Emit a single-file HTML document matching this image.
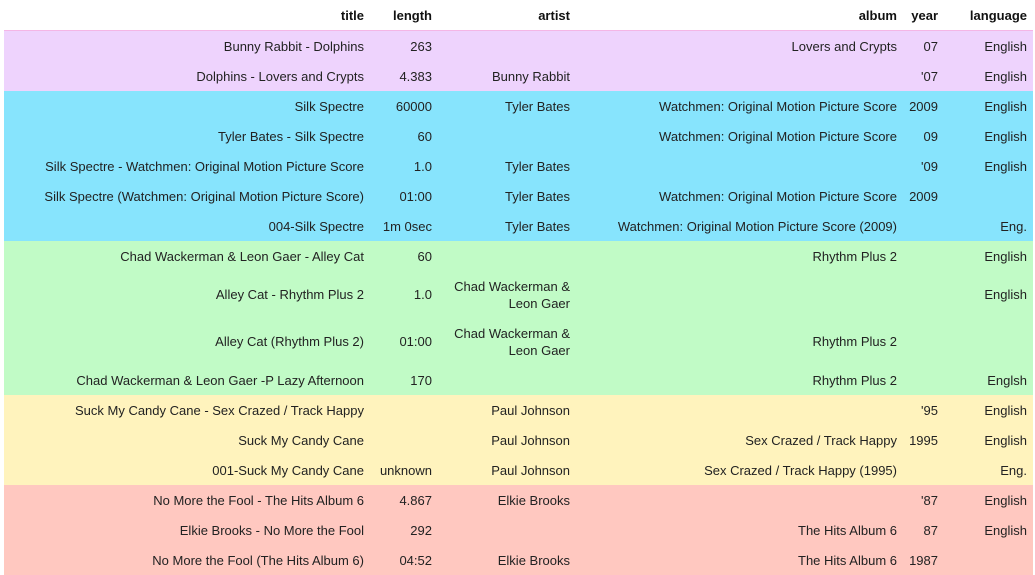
<!DOCTYPE html>
<html><head><meta charset="utf-8"><style>
body{margin:0;background:#fff;font-family:"Liberation Sans",sans-serif;font-size:13px;color:#222;}
table{position:absolute;left:4px;top:0;border-collapse:collapse;table-layout:fixed;width:1029px;}
td,th{text-align:right;padding:0 6px 0 0;line-height:17px;white-space:nowrap;overflow:hidden;}
th{height:30px;font-weight:bold;color:#111;border-bottom:1px solid #f4b6e6;background:#fff;}
td{height:30px;}
tr.t td{height:47px;}
.p td{background:#eed3fd}.b td{background:#87e4fd}.g td{background:#c1fbc6}.y td{background:#fff3bd}.r td{background:#ffc8c0}
</style></head><body>
<table>
<colgroup><col style="width:366px"><col style="width:68px"><col style="width:138px"><col style="width:327px"><col style="width:41px"><col style="width:89px"></colgroup>
<tr><th>title</th><th>length</th><th>artist</th><th>album</th><th>year</th><th>language</th></tr>
<tr class="p"><td>Bunny Rabbit - Dolphins</td><td>263</td><td></td><td>Lovers and Crypts</td><td>07</td><td>English</td></tr>
<tr class="p"><td>Dolphins - Lovers and Crypts</td><td>4.383</td><td>Bunny Rabbit</td><td></td><td>'07</td><td>English</td></tr>
<tr class="b"><td>Silk Spectre</td><td>60000</td><td>Tyler Bates</td><td>Watchmen: Original Motion Picture Score</td><td>2009</td><td>English</td></tr>
<tr class="b"><td>Tyler Bates - Silk Spectre</td><td>60</td><td></td><td>Watchmen: Original Motion Picture Score</td><td>09</td><td>English</td></tr>
<tr class="b"><td>Silk Spectre - Watchmen: Original Motion Picture Score</td><td>1.0</td><td>Tyler Bates</td><td></td><td>'09</td><td>English</td></tr>
<tr class="b"><td>Silk Spectre (Watchmen: Original Motion Picture Score)</td><td>01:00</td><td>Tyler Bates</td><td>Watchmen: Original Motion Picture Score</td><td>2009</td><td></td></tr>
<tr class="b"><td>004-Silk Spectre</td><td>1m 0sec</td><td>Tyler Bates</td><td>Watchmen: Original Motion Picture Score (2009)</td><td></td><td>Eng.</td></tr>
<tr class="g"><td>Chad Wackerman &amp; Leon Gaer - Alley Cat</td><td>60</td><td></td><td>Rhythm Plus 2</td><td></td><td>English</td></tr>
<tr class="g t"><td>Alley Cat - Rhythm Plus 2</td><td>1.0</td><td>Chad Wackerman &amp;<br>Leon Gaer</td><td></td><td></td><td>English</td></tr>
<tr class="g t"><td>Alley Cat (Rhythm Plus 2)</td><td>01:00</td><td>Chad Wackerman &amp;<br>Leon Gaer</td><td>Rhythm Plus 2</td><td></td><td></td></tr>
<tr class="g"><td>Chad Wackerman &amp; Leon Gaer -P Lazy Afternoon</td><td>170</td><td></td><td>Rhythm Plus 2</td><td></td><td>Englsh</td></tr>
<tr class="y"><td>Suck My Candy Cane - Sex Crazed / Track Happy</td><td></td><td>Paul Johnson</td><td></td><td>'95</td><td>English</td></tr>
<tr class="y"><td>Suck My Candy Cane</td><td></td><td>Paul Johnson</td><td>Sex Crazed / Track Happy</td><td>1995</td><td>English</td></tr>
<tr class="y"><td>001-Suck My Candy Cane</td><td>unknown</td><td>Paul Johnson</td><td>Sex Crazed / Track Happy (1995)</td><td></td><td>Eng.</td></tr>
<tr class="r"><td>No More the Fool - The Hits Album 6</td><td>4.867</td><td>Elkie Brooks</td><td></td><td>'87</td><td>English</td></tr>
<tr class="r"><td>Elkie Brooks - No More the Fool</td><td>292</td><td></td><td>The Hits Album 6</td><td>87</td><td>English</td></tr>
<tr class="r"><td>No More the Fool (The Hits Album 6)</td><td>04:52</td><td>Elkie Brooks</td><td>The Hits Album 6</td><td>1987</td><td></td></tr>
</table>
</body></html>
